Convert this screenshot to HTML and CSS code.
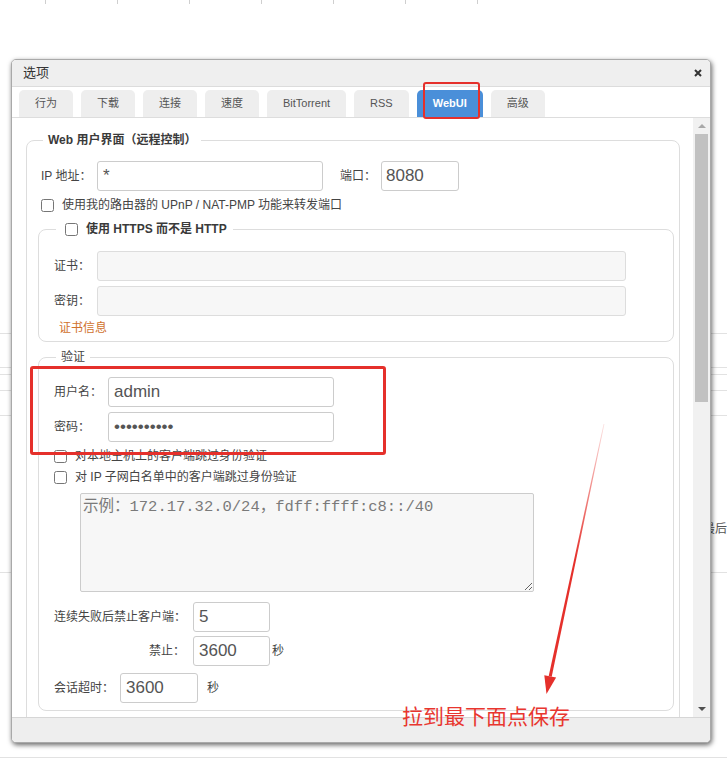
FILE: index.html
```html
<!DOCTYPE html>
<html lang="zh-CN">
<head>
<meta charset="utf-8">
<title>选项</title>
<link rel="stylesheet" href="styles.css">
</head>
<body>
<div class="desk">
  <div class="ticks"><span></span><span></span><span></span><span></span><span></span><span></span><span></span></div>
  <div class="bl bl-a"></div>
  <div class="bl bl-b"></div>
  <div class="bl bl-c"></div>
  <div class="bl bl-d"></div>
  <div class="bl bl-e"></div>
  <div class="desk-text">最后</div>
  <div class="bl bl-f"></div>
  <div class="bl bl-g"></div>
</div>

<div class="dialog">
  <div class="dlg-title">
    <span>选项</span>
    <span class="close"><svg width="8" height="8" viewBox="0 0 8 8"><path d="M1 1L7 7M7 1L1 7" stroke="#333" stroke-width="2"/></svg></span>
  </div>
  <div class="tabs">
    <div class="tab">行为</div>
    <div class="tab">下载</div>
    <div class="tab">连接</div>
    <div class="tab">速度</div>
    <div class="tab">BitTorrent</div>
    <div class="tab">RSS</div>
    <div class="tab active">WebUI</div>
    <div class="tab">高级</div>
  </div>
  <div class="dlg-body">
    <div class="pane">
      <fieldset class="fs outer">
        <legend>Web 用户界面（远程控制）</legend>
        <div class="row row-ip">
          <label class="lbl lbl-ip" for="ip">IP 地址：</label>
          <input id="ip" class="txt txt-ip" type="text" value="*">
          <label class="lbl lbl-port" for="port">端口：</label>
          <input id="port" class="txt txt-port" type="text" value="8080">
        </div>
        <div class="row row-chk row-upnp">
          <input id="upnp" class="chk" type="checkbox">
          <label class="chk-lbl" for="upnp">使用我的路由器的 UPnP / NAT-PMP 功能来转发端口</label>
        </div>

        <fieldset class="fs inner https">
          <legend class="leg-in"><input id="https" class="chk" type="checkbox"><label class="chk-lbl" for="https">使用 HTTPS 而不是 HTTP</label></legend>
          <div class="row row-cert">
            <label class="lbl lbl-cert" for="cert">证书：</label>
            <input id="cert" class="txt txt-off" type="text">
          </div>
          <div class="row row-key">
            <label class="lbl lbl-cert" for="key">密钥：</label>
            <input id="key" class="txt txt-off" type="text">
          </div>
          <div class="cert-link">证书信息</div>
        </fieldset>

        <fieldset class="fs inner auth">
          <legend>验证</legend>
          <div class="row row-user">
            <label class="lbl lbl-user" for="user">用户名：</label>
            <input id="user" class="txt txt-user" type="text" value="admin">
          </div>
          <div class="row row-pass">
            <label class="lbl lbl-user" for="pass">密码：</label>
            <input id="pass" class="txt txt-user" type="password" value="1234567890">
          </div>
          <div class="row row-chk row-local">
            <input id="local" class="chk" type="checkbox">
            <label class="chk-lbl" for="local">对本地主机上的客户端跳过身份验证</label>
          </div>
          <div class="row row-chk row-subnet">
            <input id="subnet" class="chk" type="checkbox">
            <label class="chk-lbl" for="subnet">对 IP 子网白名单中的客户端跳过身份验证</label>
          </div>
          <textarea class="whitelist" placeholder="示例：172.17.32.0/24，fdff:ffff:c8::/40"></textarea>
          <div class="row row-fail">
            <label class="lbl lbl-fail" for="fail">连续失败后禁止客户端：</label>
            <input id="fail" class="txt txt-num" type="text" value="5">
          </div>
          <div class="row row-ban">
            <label class="lbl lbl-fail lbl-right" for="ban">禁止：</label>
            <input id="ban" class="txt txt-num" type="text" value="3600">
            <span class="unit unit-ban">秒</span>
          </div>
          <div class="row row-session">
            <label class="lbl lbl-session" for="session">会话超时：</label>
            <input id="session" class="txt txt-session" type="text" value="3600">
            <span class="unit unit-session">秒</span>
          </div>
        </fieldset>
      </fieldset>
    </div>
    <div class="vscroll">
      <span class="sb-btn"><span class="tri tri-up"></span></span>
      <span class="thumb"></span>
      <span class="sb-fill"></span>
      <span class="sb-btn"><span class="tri tri-down"></span></span>
    </div>
  </div>
  <div class="dlg-foot"></div>
</div>

<div class="mark mark-tab"></div>
<div class="mark mark-auth"></div>
<svg class="arrow" width="727" height="775" viewBox="0 0 727 775">
  <defs>
    <linearGradient id="fade" x1="0" y1="424" x2="0" y2="560" gradientUnits="userSpaceOnUse">
      <stop offset="0" stop-color="#e5302b" stop-opacity="0.15"/>
      <stop offset="1" stop-color="#e5302b" stop-opacity="1"/>
    </linearGradient>
  </defs>
  <polygon points="603.6,424 604.4,424 551.7,676.7 548.7,676.1" fill="url(#fade)"/>
  <polygon points="556.1,677.6 544.3,675.2 546.5,694" fill="#e5302b"/>
</svg>
<div class="note">拉到最下面点保存</div>
</body>
</html>
```

FILE: styles.css
```css
* { box-sizing: border-box; }
html, body { margin: 0; padding: 0; }
body {
  width: 727px;
  height: 775px;
  overflow: hidden;
  position: relative;
  background: #fff;
  font-family: "Liberation Sans", "Noto Sans CJK SC", sans-serif;
  font-size: 12px;
  line-height: 16px;
  color: #444;
}

/* background page */
.ticks { display: flex; height: 4px; }
.ticks span { flex: none; width: 72px; border-right: 1px solid #cfcfcf; }
.ticks span:first-child { width: 46px; }
.bl { border-top: 1px solid #e2e2e2; }
.bl-a { margin-top: 329px; }
.bl-b { margin-top: 33px; }
.bl-c { margin-top: 6px; }
.bl-d { margin-top: 15px; }
.bl-e { margin-top: 24px; }
.desk-text { margin-top: 105px; text-align: right; color: #555; }
.bl-f { margin-top: 35px; }
.bl-g { margin-top: 184px; }

/* dialog */
.dialog {
  position: absolute;
  left: 11px;
  top: 59px;
  width: 700px;
  height: 684px;
  background: #fff;
  border: 1px solid #a9a9a9;
  border-radius: 5px;
  box-shadow: 1px 2px 5px rgba(0, 0, 0, 0.6);
  display: flex;
  flex-direction: column;
}
.dlg-title {
  flex: none;
  height: 27px;
  display: flex;
  align-items: center;
  justify-content: space-between;
  padding: 0 8px 0 11px;
  background: #efefef;
  border-bottom: 1px solid #dcdcdc;
  border-radius: 4px 4px 0 0;
  font-size: 13px;
  color: #333;
}
.close { display: flex; }

.tabs {
  flex: none;
  height: 31px;
  display: flex;
  gap: 8px;
  padding: 3px 0 0 7px;
  border-bottom: 1px solid #ddd;
}
.tab {
  height: 27px;
  line-height: 27px;
  padding: 0 16px;
  font-size: 11px;
  color: #555;
  background: #eee;
  border-radius: 5px 5px 0 0;
}
.tab.active {
  background: #4a8fd9;
  color: #fff;
  font-weight: bold;
}

.dlg-body {
  flex: none;
  height: 599px;
  display: flex;
}
.pane {
  flex: 1;
  overflow: hidden;
  padding-top: 14px;
}
.vscroll {
  flex: none;
  width: 17px;
  background: #f1f1f1;
  display: flex;
  flex-direction: column;
  align-items: center;
}
.sb-btn {
  flex: none;
  height: 16px;
  width: 17px;
  display: flex;
  align-items: center;
  justify-content: center;
}
.tri { width: 0; height: 0; border-left: 4px solid transparent; border-right: 4px solid transparent; }
.tri-up { border-bottom: 4px solid #a8a8a8; }
.tri-down { border-top: 4px solid #505050; }
.thumb { flex: none; width: 13px; height: 268px; background: #c1c1c1; }
.sb-fill { flex: 1; }

.dlg-foot {
  flex: none;
  height: 25px;
  background: #eee;
  border-top: 1px solid #d6d6d6;
  border-radius: 0 0 4px 4px;
}

/* fieldsets */
.fs {
  margin: 0;
  min-width: 0;
  border: 1px solid #ddd;
  border-radius: 8px;
}
.fs > legend { line-height: 16px; height: 16px; }
.outer {
  margin: 0 13px 0 14px;
  padding: 0 5px 20px 11px;
}
.outer > legend {
  margin-left: 5px;
  padding: 0 5px;
  font-weight: bold;
  color: #3a3a3a;
}
.inner { padding: 0 9px 5px 15px; }
.https { margin-top: 8px; }
.https > legend.leg-in {
  display: flex;
  align-items: center;
  margin-left: 2px;
  padding: 0 6px 0 9px;
  font-weight: bold;
  color: #3a3a3a;
}
.auth { margin-top: 7px; padding-bottom: 7px; }
.auth > legend { margin-left: 2px; padding: 0 5px; color: #444; }

/* rows */
.row { display: flex; align-items: center; }
.lbl { flex: none; }
.txt {
  flex: none;
  height: 30px;
  margin: 0;
  border: 1px solid #ccc;
  border-radius: 3px;
  padding: 0 5px;
  font: 17px "Liberation Sans", sans-serif;
  color: #555;
  background: #fff;
  outline: none;
}
.chk { flex: none; margin: 0; width: 13px; height: 13px; }
.chk-lbl { margin-left: 8px; }
.row-chk { height: 16px; }

.row-ip { margin-top: 13px; padding-left: 3px; }
.lbl-ip { width: 56px; }
.txt-ip { width: 226px; }
.lbl-port { width: 41px; margin-left: 17px; }
.txt-port { width: 78px; padding-left: 4px; }
.row-upnp { margin-top: 6px; padding-left: 3px; }

.row-cert { margin-top: 14px; }
.row-key { margin-top: 5px; }
.lbl-cert { width: 43px; }
.txt-off { width: 529px; background: #f7f7f7; border-color: #ddd; }
.cert-link { margin-top: 4px; padding-left: 5px; color: #d0722e; }

.row-user { margin-top: 12px; }
.row-pass { margin-top: 5px; }
.lbl-user { width: 54px; }
.txt-user { width: 226px; }
.row-local { margin-top: 6px; }
.row-subnet { margin-top: 5px; }
.whitelist {
  display: block;
  margin: 8px 0 0 26px;
  width: 454px;
  height: 99px;
  padding: 3px 2px;
  border: 1px solid #ccc;
  border-radius: 2px;
  background: #f7f7f7;
  font: 15.5px/20px "Liberation Mono", "Noto Sans CJK SC", monospace;
  color: #555;
  outline: none;
}
.whitelist::placeholder { color: #7a7a7a; }
.row-fail { margin-top: 10px; }
.lbl-fail { width: 139px; }
.lbl-right { text-align: right; padding-right: 8px; }
.txt-num { width: 77px; }
.row-ban { margin-top: 4px; }
.unit-ban { margin-left: 2px; }
.row-session { margin-top: 7px; }
.lbl-session { width: 66px; }
.txt-session { width: 78px; }
.unit-session { margin-left: 9px; }

/* annotations */
.mark {
  position: absolute;
  border: 2px solid #e5302b;
  border-radius: 3px;
}
.mark-tab { left: 423px; top: 82px; width: 57px; height: 37px; }
.mark-auth { left: 30px; top: 366px; width: 356px; height: 89px; border-width: 3px; }
.arrow { position: absolute; left: 0; top: 0; pointer-events: none; }
.note {
  position: absolute;
  left: 402px;
  top: 703px;
  font-family: "Noto Sans CJK SC", sans-serif;
  font-size: 21px;
  line-height: 24px;
  color: #e8362f;
}
```
